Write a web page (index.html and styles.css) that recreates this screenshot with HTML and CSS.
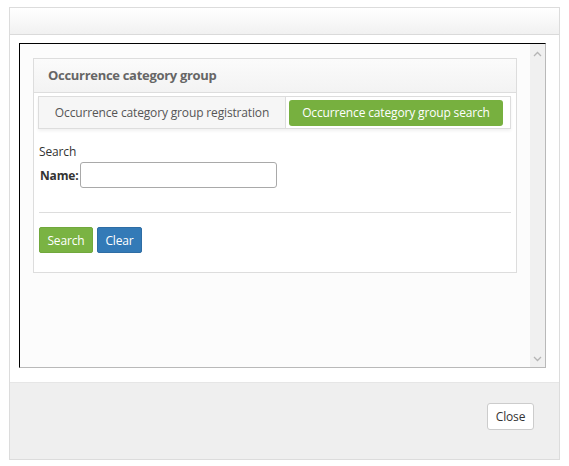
FILE: index.html
```html
<!DOCTYPE html>
<html>
<head>
<meta charset="utf-8">
<link rel="stylesheet" href="styles.css">
</head>
<body>
<div class="dialog">
  <div class="dialog-header"></div>
  <div class="dialog-body">
    <div class="frame">
      <div class="frame-content">
        <div class="panel">
          <div class="panel-header">Occurrence category group</div>
          <div class="panel-body">
            <div class="tabs">
              <div class="tab">Occurrence category group registration</div>
              <div class="tab tab-active">Occurrence category group search</div>
            </div>
            <div class="form">
              <div class="form-label">Search</div>
              <div class="form-row">
                <label class="name-label">Name:</label>
                <input class="name-input" type="text">
              </div>
              <div class="divider"></div>
              <div class="actions">
                <button class="btn btn-green">Search</button>
                <button class="btn btn-blue">Clear</button>
              </div>
            </div>
          </div>
        </div>
      </div>
      <div class="scrollbar">
        <svg class="chev" width="9" height="6" viewBox="0 0 9 6"><path d="M1 5 L4.5 1.5 L8 5" fill="none" stroke="#b5b5b5" stroke-width="1.3"/></svg>
        <svg class="chev" width="9" height="6" viewBox="0 0 9 6"><path d="M1 1 L4.5 4.5 L8 1" fill="none" stroke="#b5b5b5" stroke-width="1.3"/></svg>
      </div>
    </div>
  </div>
  <div class="dialog-footer">
    <button class="btn-close">Close</button>
  </div>
</div>
</body>
</html>
```

FILE: styles.css
```css
* { box-sizing: border-box; }
html, body { margin: 0; padding: 0; background: #fff; }
body { font-family: "Open Sans", "DejaVu Sans", sans-serif; font-size: 12px; color: #333; letter-spacing: -0.15px; }

.dialog {
  margin: 7px 0 0 9px;
  width: 551px;
  height: 453px;
  border: 1px solid #dcdcdc;
  display: flex;
  flex-direction: column;
}
.dialog-header {
  height: 27px;
  background: linear-gradient(#ffffff, #f1f1f1);
  border-bottom: 1px solid #dadada;
}
.dialog-body {
  padding: 8px 13px 14px 9px;
  background: #fff;
}
.frame {
  height: 325px;
  display: flex;
  border-top: 1px solid #000;
  border-left: 1px solid #000;
  border-right: 1px solid #b9b9b9;
  border-bottom: 1px solid #b9b9b9;
  background: #fcfcfc;
}
.frame-content { flex: 1; padding: 14px 13px 0 13px; }
.scrollbar {
  width: 15px;
  background: #f0f0f0;
  display: flex;
  flex-direction: column;
  justify-content: space-between;
  align-items: center;
  padding: 7px 0 5px;
}

.panel {
  border: 1px solid #dddddd;
  background: #fff;
  height: 215px;
}
.panel-header {
  height: 34px;
  border-bottom: 1px solid #dddddd;
  background: linear-gradient(#fbfbfb, #f3f3f3);
  padding: 0 14px;
  font-size: 13px;
  font-weight: bold;
  color: #666;
  line-height: 33px;
  letter-spacing: -0.3px;
}
.panel-body { padding: 3px 5px 0 4px; }

.tabs {
  display: flex;
  align-items: center;
  border: 1px solid #dddddd;
  height: 33px;
  background: #fff;
  box-shadow: 0 2px 3px rgba(0,0,0,0.06);
}
.tab {
  width: 247px;
  height: 31px;
  line-height: 31px;
  text-align: center;
  color: #555;
  background: #f6f6f6;
  border-right: 1px solid #dddddd;
}
.tab-active {
  width: 214px;
  height: 26px;
  line-height: 26px;
  margin-left: 3px;
  border-right: none;
  border-radius: 3px;
  background: #77b03f;
  color: #fff;
}

.form { padding: 14px 0 0 1px; }
.form-label { line-height: 18px; color: #333; }
.form-row { display: flex; align-items: center; margin-top: 1px; }
.name-label { font-weight: bold; color: #333; margin-left: 1px; margin-right: 1px; }
.name-input {
  width: 197px;
  height: 26px;
  border: 1px solid #a9a9a9;
  border-radius: 3px;
  background: #fff;
}
.divider { height: 1px; background: #dddddd; margin: 24px 0 14px 0; }
.actions { display: flex; gap: 4px; }
.btn {
  height: 26px;
  padding: 0 7px;
  border-radius: 2px;
  font-family: inherit;
  font-size: 12px;
  letter-spacing: -0.15px;
  color: #fff;
}
.btn-green { background: #7ab343; border: 1px solid #71a83c; width: 54px; }
.btn-blue { background: #337ab7; border: 1px solid #2e6da4; width: 45px; }

.dialog-footer {
  flex: 1;
  background: #efefef;
  border-top: 1px solid #e6e6e6;
  display: flex;
  justify-content: flex-end;
  align-items: flex-start;
  padding: 20px 25px 0 0;
}
.btn-close {
  width: 47px;
  height: 27px;
  background: #fff;
  border: 1px solid #cccccc;
  border-radius: 3px;
  font-family: inherit;
  font-size: 12px;
  letter-spacing: -0.15px;
  color: #333;
}
```
